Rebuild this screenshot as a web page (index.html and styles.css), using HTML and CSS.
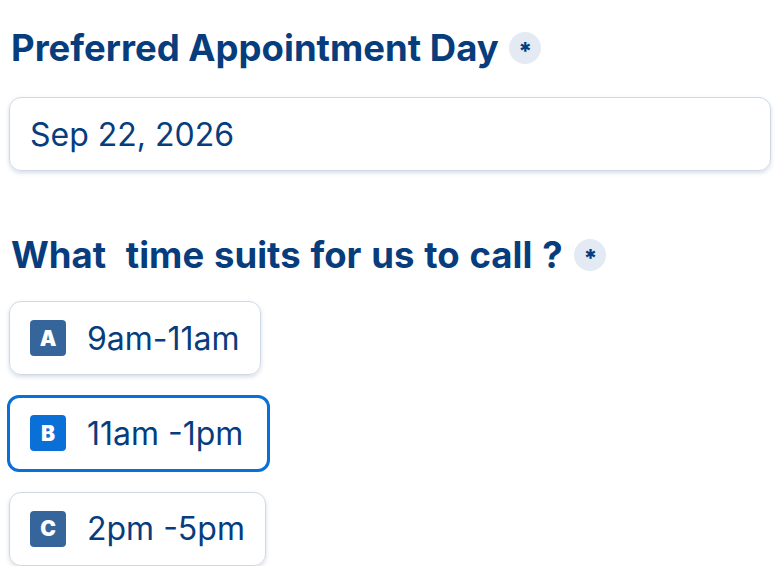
FILE: index.html
```html
<!DOCTYPE html>
<html>
<head>
<meta charset="utf-8">
<link rel="stylesheet" href="styles.css">
</head>
<body>
<div class="page">
  <div class="field">
    <h2 class="label">Preferred Appointment Day <span class="req">*</span></h2>
    <div class="input">Sep 22, 2026</div>
  </div>
  <div class="field second">
    <h2 class="label wide">What&nbsp; time suits for us to call ? <span class="req">*</span></h2>
    <div class="choices">
      <div class="choice"><span class="key">A</span><span class="txt">9am-11am</span></div>
      <div class="choice selected"><span class="key">B</span><span class="txt">11am -1pm</span></div>
      <div class="choice"><span class="key">C</span><span class="txt">2pm -5pm</span></div>
    </div>
  </div>
</div>
</body>
</html>
```
FILE: styles.css
```css
html, body {
  margin: 0;
  padding: 0;
  background: #ffffff;
}
.page {
  font-family: "Inter", "Liberation Sans", sans-serif;
  color: #073d7d;
  padding: 26px 9px 0 9px;
}
.label {
  margin: 0 0 0 2px;
  font-size: 36.5px;
  line-height: 44px;
  font-weight: 700;
  display: flex;
  align-items: center;
  white-space: pre;
}
.label.wide {
  word-spacing: 1.2px;
}
.req {
  display: inline-flex;
  align-items: flex-start;
  justify-content: center;
  width: 32px;
  height: 32px;
  border-radius: 50%;
  background: #e4eaf3;
  font-size: 24px;
  line-height: 24px;
  font-weight: 800;
  margin-left: 2px;
  padding-top: 8px;
  box-sizing: border-box;
}
.input {
  margin-top: 27px;
  height: 74px;
  box-sizing: border-box;
  border: 1.5px solid #cfd9e6;
  border-radius: 12px;
  box-shadow: 0 2px 4px rgba(40, 70, 110, 0.18);
  display: flex;
  align-items: center;
  padding-left: 20px;
  font-size: 32px;
  font-weight: 400;
}
.second {
  margin-top: 62px;
}
.choices {
  margin-top: 24px;
  display: flex;
  flex-direction: column;
  align-items: flex-start;
  gap: 20px;
}
.choice {
  height: 74px;
  box-sizing: border-box;
  border: 1.5px solid #cfd9e6;
  border-radius: 12px;
  box-shadow: 0 2px 4px rgba(40, 70, 110, 0.18);
  display: flex;
  align-items: center;
  padding: 0 20px;
  gap: 21px;
}
.choice.selected {
  border: 3px solid #0a6fd6;
  height: 77px;
  margin: -0.5px -2px 0 -2px;
  padding: 0 24px 0 20px;
  box-shadow: none;
}
.key {
  width: 36px;
  height: 36px;
  border-radius: 4px;
  background: #35659b;
  color: #ffffff;
  font-family: "Inter", "Liberation Sans", sans-serif;
  font-weight: 900;
  font-size: 21px;
  display: flex;
  align-items: center;
  justify-content: center;
}
.selected .key {
  background: #0a6fd6;
}
.txt {
  font-size: 32px;
  font-weight: 400;
}
```
